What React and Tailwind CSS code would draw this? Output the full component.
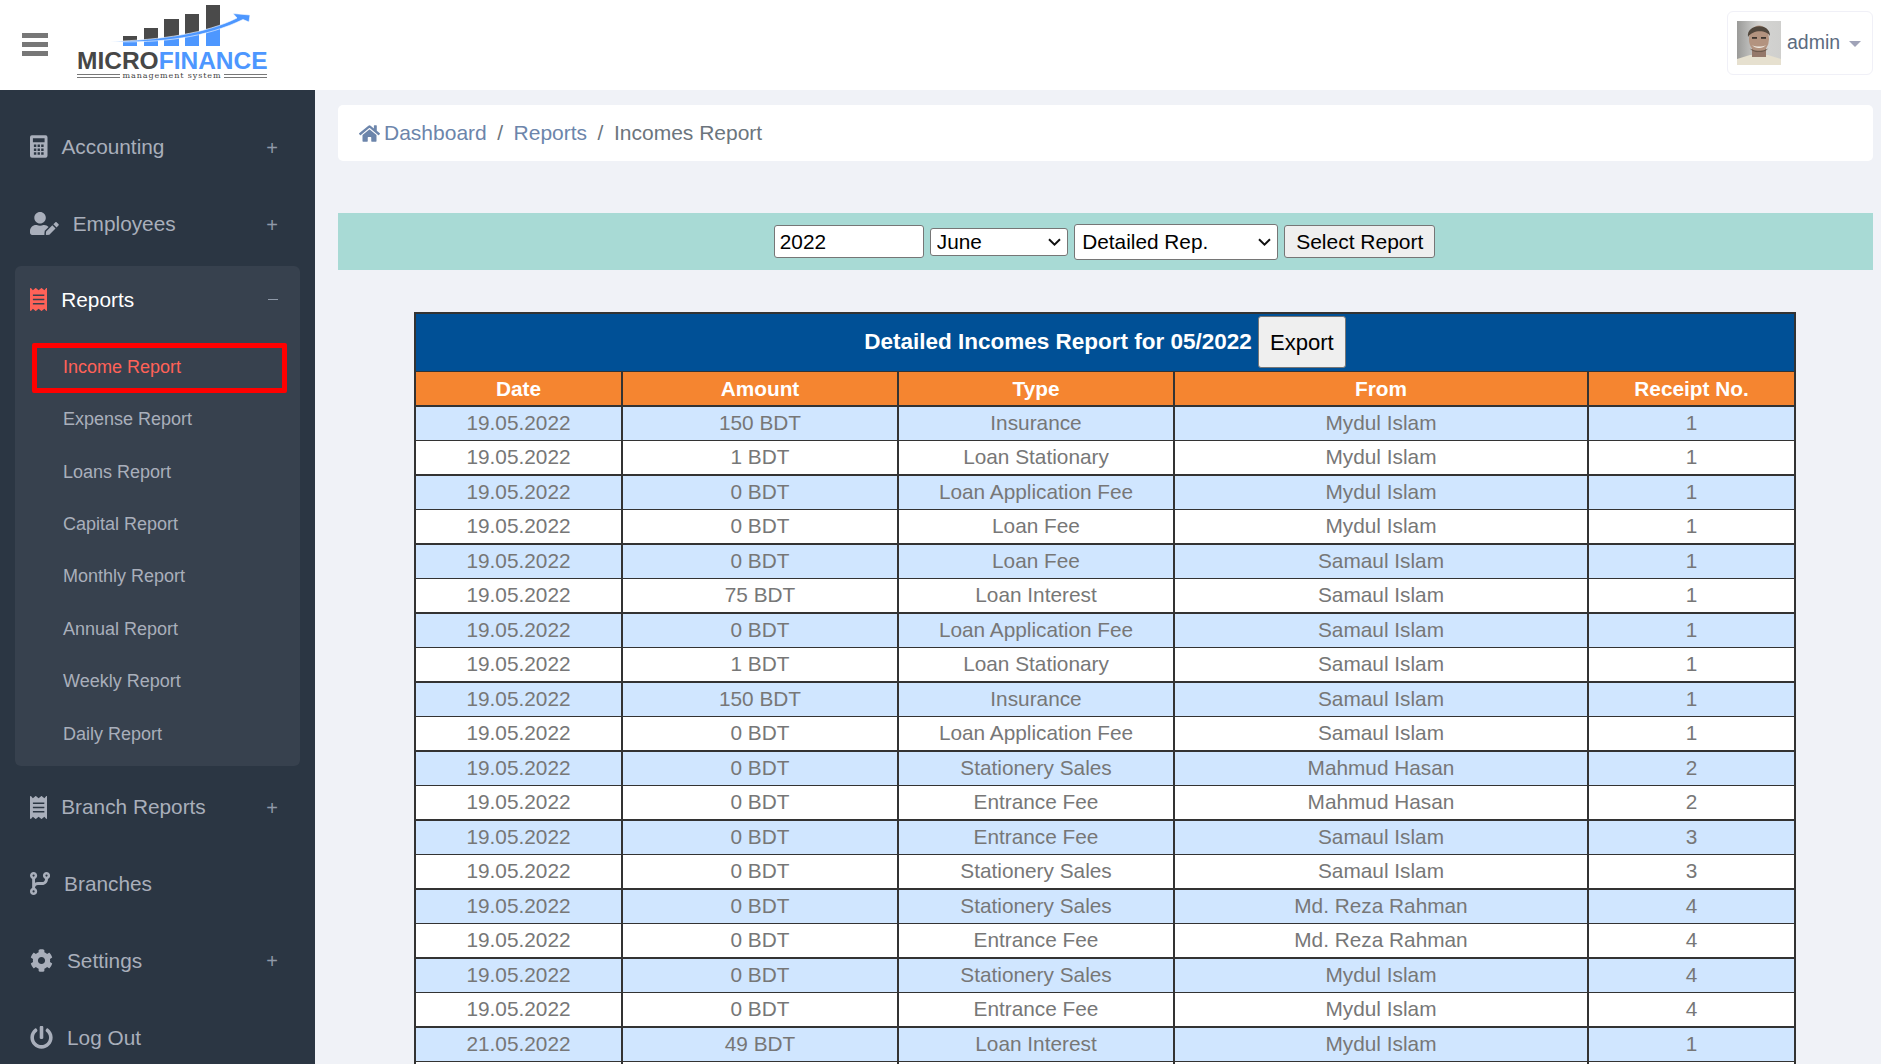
import { FaUserEdit, FaReceipt, FaCog, FaPowerOff, FaHome } from 'react-icons/fa'
import { FaCodeBranch } from 'react-icons/fa6'

const rows = [
  ['19.05.2022', '150 BDT', 'Insurance', 'Mydul Islam', '1'],
  ['19.05.2022', '1 BDT', 'Loan Stationary', 'Mydul Islam', '1'],
  ['19.05.2022', '0 BDT', 'Loan Application Fee', 'Mydul Islam', '1'],
  ['19.05.2022', '0 BDT', 'Loan Fee', 'Mydul Islam', '1'],
  ['19.05.2022', '0 BDT', 'Loan Fee', 'Samaul Islam', '1'],
  ['19.05.2022', '75 BDT', 'Loan Interest', 'Samaul Islam', '1'],
  ['19.05.2022', '0 BDT', 'Loan Application Fee', 'Samaul Islam', '1'],
  ['19.05.2022', '1 BDT', 'Loan Stationary', 'Samaul Islam', '1'],
  ['19.05.2022', '150 BDT', 'Insurance', 'Samaul Islam', '1'],
  ['19.05.2022', '0 BDT', 'Loan Application Fee', 'Samaul Islam', '1'],
  ['19.05.2022', '0 BDT', 'Stationery Sales', 'Mahmud Hasan', '2'],
  ['19.05.2022', '0 BDT', 'Entrance Fee', 'Mahmud Hasan', '2'],
  ['19.05.2022', '0 BDT', 'Entrance Fee', 'Samaul Islam', '3'],
  ['19.05.2022', '0 BDT', 'Stationery Sales', 'Samaul Islam', '3'],
  ['19.05.2022', '0 BDT', 'Stationery Sales', 'Md. Reza Rahman', '4'],
  ['19.05.2022', '0 BDT', 'Entrance Fee', 'Md. Reza Rahman', '4'],
  ['19.05.2022', '0 BDT', 'Stationery Sales', 'Mydul Islam', '4'],
  ['19.05.2022', '0 BDT', 'Entrance Fee', 'Mydul Islam', '4'],
  ['21.05.2022', '49 BDT', 'Loan Interest', 'Mydul Islam', '1'],
]

const subItems = ['Expense Report', 'Loans Report', 'Capital Report', 'Monthly Report', 'Annual Report', 'Weekly Report', 'Daily Report']

function CalculatorIcon({ className }) {
  return (
    <svg viewBox="0 0 18 23" className={className}>
      <path
        fill="currentColor"
        fillRule="evenodd"
        d="M2 0H16A2 2 0 0 1 18 2V21A2 2 0 0 1 16 23H2A2 2 0 0 1 0 21V2A2 2 0 0 1 2 0ZM3 3V7H15V3ZM4 9.5V12H6.5V9.5ZM7.8 9.5V12H10.2V9.5ZM11.5 9.5V12H14V9.5ZM4 13.5V16H6.5V13.5ZM7.8 13.5V16H10.2V13.5ZM11.5 13.5V16H14V13.5ZM4 17.5V20H6.5V17.5ZM7.8 17.5V20H10.2V17.5ZM11.5 17.5V20H14V17.5Z"
      />
    </svg>
  )
}

function NavItem({ icon: Icon, iconClass, label, sign, rowClass = 'h-[77px]' }) {
  return (
    <div className={`flex ${rowClass} items-center justify-between pl-[30px] pr-[37px] text-[#a9afbb]`}>
      <div className="flex items-center gap-[14px]">
        <Icon className={`${iconClass} shrink-0`} />
        <span className="text-[20.8px]">{label}</span>
      </div>
      {sign && <span className="mt-[2px] text-[20px] font-light text-[#8f99a8]">+</span>}
    </div>
  )
}

function Logo() {
  return (
    <div className="relative h-[90px] w-[190px]">
      <svg width="190" height="50" viewBox="0 0 190 50" className="absolute left-0 top-0">
        <rect x="46" y="36" width="14" height="10" fill="#4a4a4a" />
        <rect x="67" y="28" width="14" height="18" fill="#4a4a4a" />
        <rect x="87" y="19" width="15" height="27" fill="#4a4a4a" />
        <rect x="108" y="14" width="14" height="32" fill="#4a4a4a" />
        <rect x="129" y="5" width="14" height="36" fill="#4a4a4a" />
        <path d="M46 41 H60 V46 H46 Z M67 40 H81 V46 H67 Z M87 38 H102 V46 H87 Z M108 35 H122 V46 H108 Z M129 29 H143 V46 H129 Z" fill="#4d97ff" />
        <path d="M33 41.5 C85 40 130 33 160 18 L156 13.5 L173 15 L172 22 L166 19.5 C130 37 85 43.5 33 41.5 Z" fill="#4d97ff" stroke="#fff" strokeWidth="0.6" />
      </svg>
      <div className="absolute left-0 top-[50px] whitespace-nowrap text-[24.5px] font-bold leading-[21px]">
        <span className="text-[#474747]">MICRO</span>
        <span className="text-[#4d97ff]">FINANCE</span>
      </div>
      <div className="absolute left-0 right-0 top-[71px] flex items-center gap-[3px]">
        <div className="h-[4px] flex-1 border-y border-[#777]" />
        <span className="font-['DejaVu_Serif',serif] text-[8px] leading-[10px] tracking-[0.9px] text-[#444]">management system</span>
        <div className="h-[4px] flex-1 border-y border-[#777]" />
      </div>
    </div>
  )
}

function Avatar() {
  return (
    <svg width="44" height="44" viewBox="0 0 44 44" className="shrink-0">
      <defs>
        <filter id="soft"><feGaussianBlur stdDeviation="0.7" /></filter>
        <linearGradient id="wall" x1="0" x2="1" y1="0" y2="0">
          <stop offset="0" stopColor="#9a9a98" />
          <stop offset="0.5" stopColor="#d4d4d2" />
          <stop offset="1" stopColor="#cfcfcd" />
        </linearGradient>
      </defs>
      <rect width="44" height="44" fill="url(#wall)" />
      <g filter="url(#soft)">
        <path d="M0 44 V38 L13 34 H31 L44 38 V44 Z" fill="#e6e0cf" />
        <rect x="15" y="27" width="14" height="9" fill="#94786a" />
        <ellipse cx="22" cy="18" rx="10" ry="13.5" fill="#b3937f" />
        <path d="M11 16 C9 3 33 1 33 15 C30 9 16 8 11 16 Z" fill="#51463c" />
        <path d="M15 24 C18 28 26 28 29 24 C26 26 18 26 15 24 Z" fill="#f2ece4" />
        <rect x="15" y="16" width="5" height="1.8" fill="#3e342e" />
        <rect x="24" y="16" width="5" height="1.8" fill="#3e342e" />
        <path d="M12 26 C15 33 29 33 32 26 C30 31 14 31 12 26 Z" fill="#6d5a4e" />
      </g>
    </svg>
  )
}

function Chevron() {
  return (
    <svg viewBox="0 0 13 8" className="pointer-events-none absolute right-[7px] top-1/2 h-[8px] w-[13px] -translate-y-1/2">
      <path d="M1 1.2L6.5 6.6L12 1.2" fill="none" stroke="#111" strokeWidth="2" />
    </svg>
  )
}

export default function App() {
  return (
    <div className="flex h-screen flex-col overflow-hidden bg-[#f0f2f7] font-['Liberation_Sans',Arial,sans-serif]">
      {/* Top bar */}
      <header className="flex h-[90px] shrink-0 items-center justify-between bg-white pr-[8px]">
        <div className="flex items-center">
          <div className="mb-[1px] ml-[22px] flex w-[26px] flex-col gap-[4.5px]">
            <div className="h-[4.5px] bg-[#777]" />
            <div className="h-[4.5px] bg-[#777]" />
            <div className="h-[4.5px] bg-[#777]" />
          </div>
          <div className="ml-[29px]">
            <Logo />
          </div>
        </div>
        <div className="mb-[4px] flex h-[64px] w-[146px] items-center rounded-[6px] border border-[#f0f0f7] pl-[9px]">
          <Avatar />
          <span className="ml-[6px] text-[19.5px] text-[#5c6b80]">admin</span>
          <span className="ml-[9px] mt-[2px] h-0 w-0 border-x-[6px] border-t-[6px] border-x-transparent border-t-[#a0a3b8]" />
        </div>
      </header>

      <div className="flex min-h-0 flex-1">
        {/* Sidebar */}
        <aside className="w-[315px] shrink-0 bg-[#2b3643] pt-[18px]">
          <NavItem icon={CalculatorIcon} iconClass="h-[23px] w-[17.5px]" label="Accounting" sign />
          <NavItem icon={FaUserEdit} iconClass="h-[23px] w-[28.75px]" label="Employees" sign />
          <div className="mx-[15px] mt-[4px] rounded-[6px] bg-[#37414e] pb-[6px]">
            <div className="mb-[10px] flex h-[67px] items-center justify-between pl-[15px] pr-[22px]">
              <div className="flex items-center gap-[14px]">
                <FaReceipt className="h-[23px] w-[17.25px] text-[#ff6258]" />
                <span className="text-[20.8px] text-white">Reports</span>
              </div>
              <div className="h-[1.5px] w-[10px] bg-[#8f99a8]" />
            </div>
            <div className="ml-[17px] mr-[13px] flex h-[50px] items-center rounded-[2px] border-[5px] border-[#ff0000] pb-[1px] pl-[26px] text-[18px] text-[#ff6258]">
              Income Report
            </div>
            <div className="pt-[0.5px]">
              {subItems.map((item) => (
                <div key={item} className="flex h-[52.4px] items-center pl-[48px] text-[18px] text-[#a9afbb]">
                  {item}
                </div>
              ))}
            </div>
          </div>
          <div className="mt-[3px]">
            <NavItem icon={FaReceipt} iconClass="h-[23px] w-[17.25px]" label="Branch Reports" sign rowClass="h-[75.6px]" />
            <NavItem icon={FaCodeBranch} iconClass="h-[23px] w-[20.1px]" label="Branches" />
            <NavItem icon={FaCog} iconClass="h-[23px] w-[23px]" label="Settings" sign />
            <NavItem icon={FaPowerOff} iconClass="h-[23px] w-[23px]" label="Log Out" />
          </div>
        </aside>

        {/* Main */}
        <main className="min-w-0 flex-1 pl-[23px] pr-[8px] pt-[15px]">
          <div className="flex h-[56px] items-center rounded-[5px] bg-white pl-[21px] text-[21px]">
            <FaHome className="mr-[4px] text-[#6c85ab]" />
            <span className="text-[#6c85ab]">Dashboard</span>
            <span className="mx-[10.5px] text-[#6c757d]">/</span>
            <span className="text-[#6c85ab]">Reports</span>
            <span className="mx-[10.5px] text-[#6c757d]">/</span>
            <span className="text-[#6c757d]">Incomes Report</span>
          </div>

          <div className="mt-[52px] flex h-[57px] items-center justify-center bg-[#a8dad5] pr-[2px] text-[20.8px] text-black">
            <input
              readOnly
              value="2022"
              className="h-[33px] w-[150px] rounded-[3px] border border-[#767676] bg-white px-[5px] outline-none"
            />
            <div className="relative ml-[6px] h-[28px] w-[138px]">
              <select className="block h-full w-full appearance-none rounded-[3px] border border-[#767676] bg-white py-0 pl-[6px] leading-[24px]" defaultValue="June">
                <option>June</option>
              </select>
              <Chevron />
            </div>
            <div className="relative ml-[6.5px] h-[36px] w-[204px]">
              <select className="block h-full w-full appearance-none rounded-[3px] border border-[#767676] bg-white py-0 pl-[7px]" defaultValue="Detailed Rep.">
                <option>Detailed Rep.</option>
              </select>
              <Chevron />
            </div>
            <button className="ml-[6px] h-[33px] w-[151px] rounded-[3px] border border-[#767676] bg-[#efefef] text-[21px]">Select Report</button>
          </div>

          <table className="ml-[76px] mt-[42px] w-[1382px] table-fixed border-collapse border-2 border-[#333] text-center text-[20.8px] text-[#777]">
            <colgroup>
              <col className="w-[15%]" />
              <col className="w-[20%]" />
              <col className="w-[20%]" />
              <col className="w-[30%]" />
              <col className="w-[15%]" />
            </colgroup>
            <thead>
              <tr className="h-[58px] bg-[#005096] font-bold text-white">
                <th colSpan={5} className="border-b border-[#333] p-0">
                  <div className="flex items-center justify-center">
                    <span className="text-[22.5px]">Detailed Incomes Report for 05/2022</span>
                    <button className="ml-[6px] h-[52px] w-[88px] rounded-[3px] border border-[#767676] bg-[#efefef] text-[22.1px] font-normal text-black">
                      Export
                    </button>
                  </div>
                </th>
              </tr>
              <tr className="h-[34.5px] bg-[#f58530] font-bold text-white">
                {['Date', 'Amount', 'Type', 'From', 'Receipt No.'].map((h) => (
                  <th key={h} className="border-x-2 border-b-2 border-[#333] p-0 pt-[1px]">{h}</th>
                ))}
              </tr>
            </thead>
            <tbody>
              {rows.map((row, i) => (
                <tr key={i} className={`h-[34.5px] ${i % 2 === 0 ? 'bg-[#d0e6ff]' : 'bg-white'}`}>
                  {row.map((cell, j) => (
                    <td key={j} className={`border-x-2 border-[#333] p-0 ${i % 2 === 0 ? 'border-b' : 'border-b-2'}`}>{cell}</td>
                  ))}
                </tr>
              ))}
              <tr className="h-[34.5px] bg-white">
                {[0, 1, 2, 3, 4].map((j) => (
                  <td key={j} className="border-x-2 border-[#333] p-0" />
                ))}
              </tr>
            </tbody>
          </table>
        </main>
      </div>
    </div>
  )
}
